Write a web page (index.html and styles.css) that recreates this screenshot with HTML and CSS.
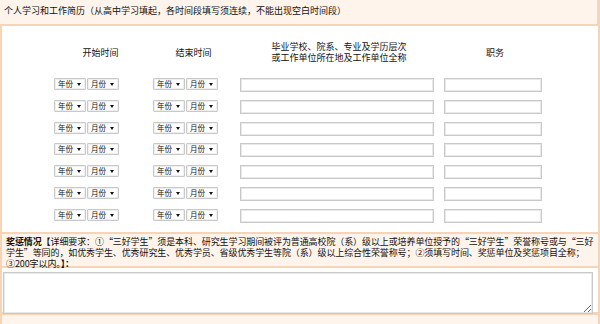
FILE: index.html
```html
<!DOCTYPE html>
<html lang="zh-CN">
<head>
  <meta charset="UTF-8">
  <meta name="viewport" content="width=device-width, initial-scale=1.0">
  <title>个人简历</title>
  <link rel="stylesheet" href="styles.css">
</head>
<body>
  <div class="form">
    <div class="sec-title">个人学习和工作简历（从高中学习填起，各时间段填写须连续，不能出现空白时间段）</div>

    <div class="resume">
      <div class="resume-grid">
        <div class="th">开始时间</div>
        <div class="th">结束时间</div>
        <div class="th">毕业学校、院系、专业及学历层次<br>或工作单位所在地及工作单位全称</div>
        <div class="th">职务</div>

        <div class="td"><span class="sel"><select><option>年份</option></select></span><span class="sel"><select><option>月份</option></select></span></div>
        <div class="td"><span class="sel"><select><option>年份</option></select></span><span class="sel"><select><option>月份</option></select></span></div>
        <div class="td"><input class="txt txt-long" type="text"></div>
        <div class="td"><input class="txt txt-short" type="text"></div>

        <div class="td"><span class="sel"><select><option>年份</option></select></span><span class="sel"><select><option>月份</option></select></span></div>
        <div class="td"><span class="sel"><select><option>年份</option></select></span><span class="sel"><select><option>月份</option></select></span></div>
        <div class="td"><input class="txt txt-long" type="text"></div>
        <div class="td"><input class="txt txt-short" type="text"></div>

        <div class="td"><span class="sel"><select><option>年份</option></select></span><span class="sel"><select><option>月份</option></select></span></div>
        <div class="td"><span class="sel"><select><option>年份</option></select></span><span class="sel"><select><option>月份</option></select></span></div>
        <div class="td"><input class="txt txt-long" type="text"></div>
        <div class="td"><input class="txt txt-short" type="text"></div>

        <div class="td"><span class="sel"><select><option>年份</option></select></span><span class="sel"><select><option>月份</option></select></span></div>
        <div class="td"><span class="sel"><select><option>年份</option></select></span><span class="sel"><select><option>月份</option></select></span></div>
        <div class="td"><input class="txt txt-long" type="text"></div>
        <div class="td"><input class="txt txt-short" type="text"></div>

        <div class="td"><span class="sel"><select><option>年份</option></select></span><span class="sel"><select><option>月份</option></select></span></div>
        <div class="td"><span class="sel"><select><option>年份</option></select></span><span class="sel"><select><option>月份</option></select></span></div>
        <div class="td"><input class="txt txt-long" type="text"></div>
        <div class="td"><input class="txt txt-short" type="text"></div>

        <div class="td"><span class="sel"><select><option>年份</option></select></span><span class="sel"><select><option>月份</option></select></span></div>
        <div class="td"><span class="sel"><select><option>年份</option></select></span><span class="sel"><select><option>月份</option></select></span></div>
        <div class="td"><input class="txt txt-long" type="text"></div>
        <div class="td"><input class="txt txt-short" type="text"></div>

        <div class="td"><span class="sel"><select><option>年份</option></select></span><span class="sel"><select><option>月份</option></select></span></div>
        <div class="td"><span class="sel"><select><option>年份</option></select></span><span class="sel"><select><option>月份</option></select></span></div>
        <div class="td"><input class="txt txt-long" type="text"></div>
        <div class="td"><input class="txt txt-short" type="text"></div>
      </div>
    </div>

    <div class="awards-note"><b>奖惩情况【</b>详细要求：①“三好学生”须是本科、研究生学习期间被评为普通高校院（系）级以上或培养单位授予的“三好学生”荣誉称号或与“三好学生”等同的，如优秀学生、优秀研究生、优秀学员、省级优秀学生等院（系）级以上综合性荣誉称号；②须填写时间、奖惩单位及奖惩项目全称；③200字以内。<b>】：</b></div>

    <div class="awards-box"><textarea class="awards-input"></textarea></div>

    <div class="foot"></div>
  </div>
</body>
</html>
```

FILE: styles.css
```css
:root {
  --peach-bg: #fef4eb;
  --peach-line: #f6d4b7;
  --field-line: #c9c9c9;
  --text: #111;
}

body {
  margin: 0;
  font-family: "Noto Sans CJK SC", "DejaVu Sans", sans-serif;
  font-size: 9px;
  color: var(--text);
  background: #fff;
}

.form {
  width: 600px;
  height: 324px;
  display: flex;
  flex-direction: column;
  overflow: hidden;
}

.sec-title {
  height: 24px;
  line-height: 22px;
  padding-left: 4px;
  background: var(--peach-bg);
  border-right: 3px solid var(--peach-line);
  border-bottom: 2px solid var(--peach-line);
}

.resume {
  height: 206px;
  border-left: 2px solid var(--peach-line);
  border-right: 2px solid var(--peach-line);
  border-bottom: 2px solid var(--peach-line);
}

.resume-grid {
  width: 498px;
  margin: 0 auto;
  display: grid;
  grid-template-columns: 99px 87px 204px 108px;
  grid-template-rows: 52px;
  grid-auto-rows: 21.8px;
}

.th {
  display: flex;
  align-items: center;
  justify-content: center;
  text-align: center;
  line-height: 11px;
}

.td {
  display: flex;
  align-items: flex-start;
  gap: 1px;
  padding-left: 3px;
}

.sel {
  position: relative;
  display: block;
}

.sel select {
  appearance: none;
  -webkit-appearance: none;
  display: block;
  width: 32px;
  height: 12px;
  margin: 0;
  padding: 0 0 0 3px;
  font: 7.5px/10px "Noto Sans CJK SC", sans-serif;
  color: var(--text);
  background: #fff;
  border: 1px solid var(--field-line);
  border-radius: 1px;
  box-shadow: inset 0 0 0 1px #efefef;
}

.sel::after {
  content: "";
  position: absolute;
  top: 5px;
  right: 5px;
  border-left: 2px solid transparent;
  border-right: 2px solid transparent;
  border-top: 3px solid #111;
  pointer-events: none;
}

.txt {
  display: block;
  height: 14px;
  margin: 0;
  padding: 0 2px;
  box-sizing: border-box;
  font-size: 9px;
  background: #fff;
  border: 1px solid var(--field-line);
  box-shadow: inset 0 0 0 1px #e9e9e9;
}

.txt-long {
  width: 194px;
}

.txt-short {
  width: 98px;
}

.awards-note {
  height: 34px;
  padding: 2px 0 0 4px;
  box-sizing: border-box;
  line-height: 11px;
  letter-spacing: -0.1px;
  background: var(--peach-bg);
  border-left: 2px solid var(--peach-line);
  border-right: 2px solid var(--peach-line);
  border-bottom: 2px solid var(--peach-line);
}

.awards-box {
  height: 47px;
  padding: 4px 0 0 1px;
  box-sizing: border-box;
  border-left: 2px solid var(--peach-line);
  border-right: 2px solid var(--peach-line);
  border-bottom: 3px solid var(--peach-line);
}

.awards-input {
  display: block;
  width: 590px;
  height: 42px;
  margin: 0;
  box-sizing: border-box;
  font-size: 9px;
  border: 1px solid var(--field-line);
  box-shadow: inset 0 0 0 1px #e9e9e9;
  border-radius: 0;
}

.foot {
  flex: 1;
  background: var(--peach-bg);
  border-left: 2px solid var(--peach-line);
  border-right: 2px solid var(--peach-line);
}
```
